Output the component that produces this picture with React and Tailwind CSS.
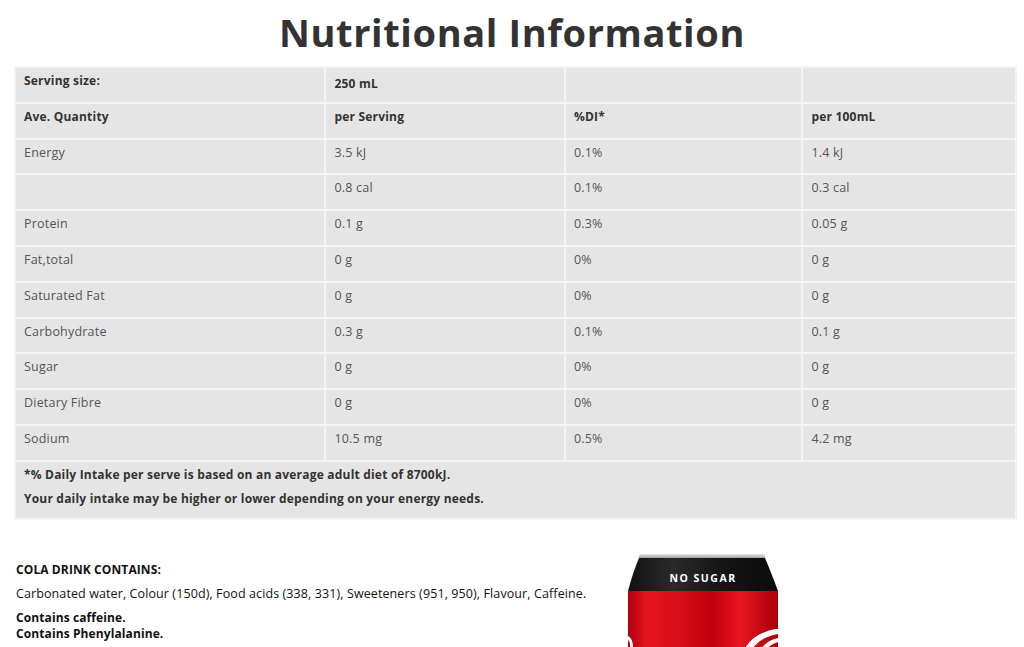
import React from "react";

// rows of the nutrition panel
const rows = [
  ["Energy", "3.5 kJ", "0.1%", "1.4 kJ"],
  ["", "0.8 cal", "0.1%", "0.3 cal"],
  ["Protein", "0.1 g", "0.3%", "0.05 g"],
  ["Fat,total", "0 g", "0%", "0 g"],
  ["Saturated Fat", "0 g", "0%", "0 g"],
  ["Carbohydrate", "0.3 g", "0.1%", "0.1 g"],
  ["Sugar", "0 g", "0%", "0 g"],
  ["Dietary Fibre", "0 g", "0%", "0 g"],
  ["Sodium", "10.5 mg", "0.5%", "4.2 mg"],
];

const cell = "h-[35.8px] align-top pt-[5px] px-[8px] border-2 border-[#f4f4f4] leading-[16px]";

function Can() {
  return (
    <svg width="160" height="100" viewBox="0 0 160 100" className="block -mt-[4px]">
      <defs>
        <linearGradient id="red" x1="0" x2="1" y1="0" y2="0">
          <stop offset="0" stopColor="#b0000c" />
          <stop offset="0.12" stopColor="#e4141e" />
          <stop offset="0.35" stopColor="#d80e18" />
          <stop offset="0.55" stopColor="#c0000c" />
          <stop offset="0.75" stopColor="#e8161f" />
          <stop offset="1" stopColor="#a8000a" />
        </linearGradient>
        <linearGradient id="blk" x1="0" x2="1" y1="0" y2="0">
          <stop offset="0" stopColor="#111" />
          <stop offset="0.3" stopColor="#2a2a2a" />
          <stop offset="0.6" stopColor="#161616" />
          <stop offset="1" stopColor="#0a0a0a" />
        </linearGradient>
        <linearGradient id="rim" x1="0" x2="0" y1="0" y2="1">
          <stop offset="0" stopColor="#e8e8e8" />
          <stop offset="1" stopColor="#a0a0a0" />
        </linearGradient>
      </defs>
      <path d="M14 4 Q14 2 16 2 L138 2 Q140 2 140 4 L140 6 L14 6 Z" fill="url(#rim)" />
      <path d="M14 6 L140 6 Q146 20 153 39 L3 39 Q8 20 14 6 Z" fill="url(#blk)" />
      <path d="M3 39 L153 39 L153 100 L3 100 Z" fill="url(#red)" />
      <path d="M118 100 Q126 82 150 77 L153 77 L153 82 Q134 85 125 100 Z" fill="#fff" />
      <path d="M134 100 Q141 88 153 86 L153 90 Q145 92 139 100 Z" fill="#fff" />
      <path d="M3 84 Q9 87 8 100 L5 100 Q6 90 3 88 Z" fill="#fff" />
      <text x="78" y="30" textAnchor="middle" fill="#fff" fontSize="10.5" fontWeight="700" letterSpacing="1.5" fontFamily="'Open Sans', sans-serif">NO SUGAR</text>
    </svg>
  );
}

export default function App() {
  return (
    <div className="bg-white w-[1024px] h-[647px] overflow-hidden text-[#555]" style={{ fontFamily: "'Open Sans', sans-serif" }}>
      <h1 className="text-center text-[38px] font-bold text-[#333] leading-none pt-[13px] pb-[15px] tracking-[0.6px]">
        Nutritional Information
      </h1>

      <div className="px-[14px]">
        <table className="w-[1003px] border-collapse text-[12.5px] tracking-[0.2px] bg-[#e5e5e5]">
          <colgroup>
            <col className="w-[311px]" />
            <col className="w-[240px]" />
            <col className="w-[238px]" />
            <col className="w-[214px]" />
          </colgroup>
          <tbody>
            <tr className="font-bold text-[#333] text-[12px]">
              <td className={cell}>Serving size:</td>
              <td className={cell + " pt-[8px]"}>250 mL</td>
              <td className={cell}></td>
              <td className={cell}></td>
            </tr>
            <tr className="font-bold text-[#333] text-[12px]">
              <td className={cell}>Ave. Quantity</td>
              <td className={cell}>per Serving</td>
              <td className={cell}>%DI*</td>
              <td className={cell}>per 100mL</td>
            </tr>
            {rows.map((r, i) => (
              <tr key={i}>
                {r.map((v, j) => (
                  <td key={j} className={cell}>{v}</td>
                ))}
              </tr>
            ))}
            <tr className="font-bold text-[#333] text-[12px]">
              <td colSpan={4} className="h-[58px] align-top pt-[1px] px-[8px] border-2 border-[#f4f4f4] leading-[24px]">
                <p>*% Daily Intake per serve is based on an average adult diet of 8700kJ.</p>
                <p>Your daily intake may be higher or lower depending on your energy needs.</p>
              </td>
            </tr>
          </tbody>
        </table>
      </div>

      <div className="flex pt-[36px] px-[16px]">
        <div className="w-[609px] pt-[6px] text-[12.5px] tracking-[0.1px] text-[#111]">
          <p className="font-bold text-[12px] leading-[15px]">COLA DRINK CONTAINS:</p>
          <p className="mt-[9px] leading-[15px]">Carbonated water, Colour (150d), Food acids (338, 331), Sweeteners (951, 950), Flavour, Caffeine.</p>
          <p className="mt-[9px] font-bold text-[12px] leading-[16px]">Contains caffeine.</p>
          <p className="font-bold text-[12px] leading-[16px]">Contains Phenylalanine.</p>
        </div>
        <Can />
      </div>
    </div>
  );
}
